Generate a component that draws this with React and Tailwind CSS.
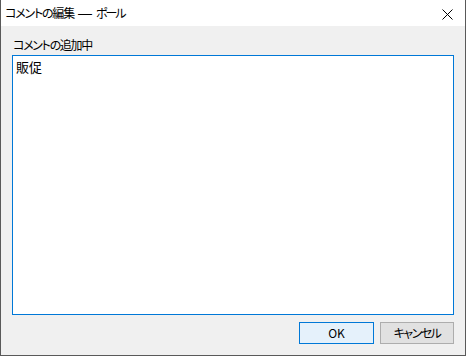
export default function App() {
  return (
    <div
      className="w-[466px] h-[356px] flex flex-col bg-[#f0f0f0] border border-t-0 border-[#595959] text-[12px] text-black [font-feature-settings:'palt']"
      style={{ fontFamily: '"Noto Sans CJK JP", "Noto Sans", sans-serif' }}
    >
      {/* title bar */}
      <div className="h-[26px] bg-white flex items-center justify-between pl-[4px] pr-[12px] shrink-0">
        <span className="leading-none flex items-center">
          <span className="tracking-[-1.2px]">コメントの編集</span>
          <span className="font-['Liberation_Sans'] text-[14px] mx-[4px]">—</span>
          <span className="tracking-[-2px]">ポール</span>
        </span>
        <svg width="11" height="11" viewBox="0 0 11 11" className="mt-[2px]">
          <path d="M0.5 0.5 L10.5 10.5 M10.5 0.5 L0.5 10.5" stroke="#000" strokeWidth="1" />
        </svg>
      </div>

      <div className="flex flex-col flex-1 pl-[11px] pr-[11px]">
        <div className="h-[29px] flex items-end pb-[4px] pl-px leading-none tracking-[-1.3px]">コメントの追加中</div>
        <div className="h-[260px] bg-white border border-[#0078d7] px-[3px] pt-[3px] leading-[16px] text-[13px]">
          販促
        </div>
        <div className="flex justify-end gap-[6px] mt-[7px]">
          <button className="w-[75px] h-[22px] bg-[#e5f1fb] border border-[#0078d7] leading-none text-[12px]">
            OK
          </button>
          <button className="w-[74px] h-[22px] bg-[#e1e1e1] border border-[#adadad] leading-none text-[12px] tracking-[-1.5px]">
            キャンセル
          </button>
        </div>
      </div>
    </div>
  );
}
